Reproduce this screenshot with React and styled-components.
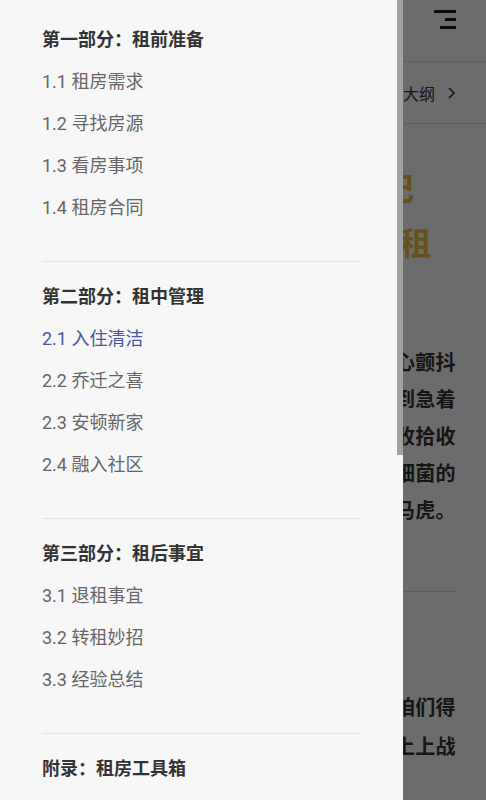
import styled, { createGlobalStyle } from 'styled-components';

const GlobalStyle = createGlobalStyle`
  html, body {
    margin: 0;
    padding: 0;
    overflow: hidden;
  }
  body {
    font-family: Roboto, "Noto Sans CJK SC", sans-serif;
  }
`;

const sections = [
  {
    title: '第一部分：租前准备',
    items: ['1.1 租房需求', '1.2 寻找房源', '1.3 看房事项', '1.4 租房合同'],
  },
  {
    title: '第二部分：租中管理',
    items: ['2.1 入住清洁', '2.2 乔迁之喜', '2.3 安顿新家', '2.4 融入社区'],
  },
  {
    title: '第三部分：租后事宜',
    items: ['3.1 退租事宜', '3.2 转租妙招', '3.3 经验总结'],
  },
  {
    title: '附录：租房工具箱',
    items: [],
  },
];

const active = '2.1 入住清洁';

const intro = [
  '拿到新家钥匙的那一刻，很多人激动得手心颤抖',
  '从看房的小心翼翼，到签约时的忐忑，再到急着',
  '搬进去的迫不及待，每一步都需要用心。收拾收',
  '纳之前，别忘了清理那些看不见的灰尘和细菌的',
  '死角，这一步关系到家人健康，千万不能马虎。',
];

const cleaning = [
  '在正式搬进新家之前，为了住得更安心，咱们得',
  '先来一次彻底的大扫除，准备好工具，马上上战',
  '场吧！',
];

const App = () => {
  return (
    <>
      <GlobalStyle />
      <Page>
        <TopBar>
          <svg width="22" height="20" viewBox="0 0 22 20">
            <rect x="0" y="0" width="22" height="3" fill="#222" />
            <rect x="11" y="8" width="11" height="3" fill="#222" />
            <rect x="6" y="16" width="16" height="3" fill="#222" />
          </svg>
        </TopBar>
        <OutlineRow>
          <span>第一部分 租前准备</span>
          <OutlineLink>
            大纲
            <svg width="9" height="14" viewBox="0 0 9 14">
              <path d="M2 2l5 5-5 5" fill="none" stroke="#333" strokeWidth="1.6" />
            </svg>
          </OutlineLink>
        </OutlineRow>
        <Article>
          <Title>
            给职场新人的一本租房笔记
            <br />
            2024 年：从看房到退房转租
          </Title>
          <Paragraph>
            {intro.map((line) => (
              <Line key={line}>{line}</Line>
            ))}
          </Paragraph>
          <Divider />
          <SubTitle>入住清洁</SubTitle>
          <Paragraph $top={31} $lh={39}>
            {cleaning.map((line) => (
              <Line key={line}>{line}</Line>
            ))}
          </Paragraph>
        </Article>
      </Page>
      <Overlay />
      <Drawer>
        {sections.map((section) => (
          <Section key={section.title}>
            <SectionTitle>{section.title}</SectionTitle>
            {section.items.map((item) => (
              <Item key={item} $active={item === active}>
                {item}
              </Item>
            ))}
          </Section>
        ))}
        <ScrollThumb />
      </Drawer>
    </>
  );
};

const Page = styled.div`
  height: 100vh;
  overflow: hidden;
  background-color: #fafafa;
`;

const TopBar = styled.div`
  height: 62px;
  box-sizing: border-box;
  border-bottom: 1px solid #dcdcdc;
  display: flex;
  justify-content: flex-end;
  align-items: flex-start;
  padding: 10px 30px 0 0;
`;

const OutlineRow = styled.div`
  height: 62px;
  box-sizing: border-box;
  border-bottom: 1px solid #dcdcdc;
  display: flex;
  justify-content: space-between;
  align-items: center;
  padding: 0 30px;
  font-size: 16px;
  color: #333;
`;

const OutlineLink = styled.span`
  display: flex;
  align-items: center;
  gap: 12px;
`;

const Article = styled.div`
  padding: 38px 30px 0;
`;

const Title = styled.h1`
  margin: 0;
  font-size: 32px;
  line-height: 55px;
  font-weight: 700;
  color: #ecbc3c;
  white-space: nowrap;
`;

const Paragraph = styled.p`
  margin: ${(p) => p.$top ?? 73}px 0 0;
  font-size: 20px;
  line-height: ${(p) => p.$lh ?? 37}px;
  font-weight: 700;
  color: #333;
  letter-spacing: 0.28px;
`;

const Line = styled.span`
  display: block;
  white-space: nowrap;
`;

const Divider = styled.hr`
  margin: 61px 0 0;
  border: none;
  border-top: 1px solid #d8d8d8;
`;

const SubTitle = styled.h2`
  margin: 30px 0 0;
  font-size: 22px;
  line-height: 36px;
  color: #333;
`;

const Overlay = styled.div`
  position: fixed;
  inset: 0;
  background-color: rgba(0, 0, 0, 0.57);
`;

const Drawer = styled.nav`
  position: fixed;
  top: 0;
  left: 0;
  bottom: 0;
  width: 403px;
  box-sizing: border-box;
  padding: 5px 6px 0 0;
  background-color: #f7f7f7;
  overflow: hidden;
`;

const ScrollThumb = styled.div`
  position: absolute;
  top: 0;
  right: 0;
  width: 6px;
  height: 455px;
  background-color: #a2a2a2;
`;

const Section = styled.section`
  margin: 0 37px 0 42px;
  padding: 14px 0 32px;
  border-bottom: 1px solid #e3e3e3;

  &:last-of-type {
    border-bottom: none;
  }
`;

const SectionTitle = styled.div`
  height: 42px;
  line-height: 42px;
  font-size: 18px;
  font-weight: 700;
  color: #333;
`;

const Item = styled.div`
  height: 42px;
  line-height: 42px;
  font-size: 18px;
  color: ${(p) => (p.$active ? '#4459a3' : '#666')};
`;

export default App;
